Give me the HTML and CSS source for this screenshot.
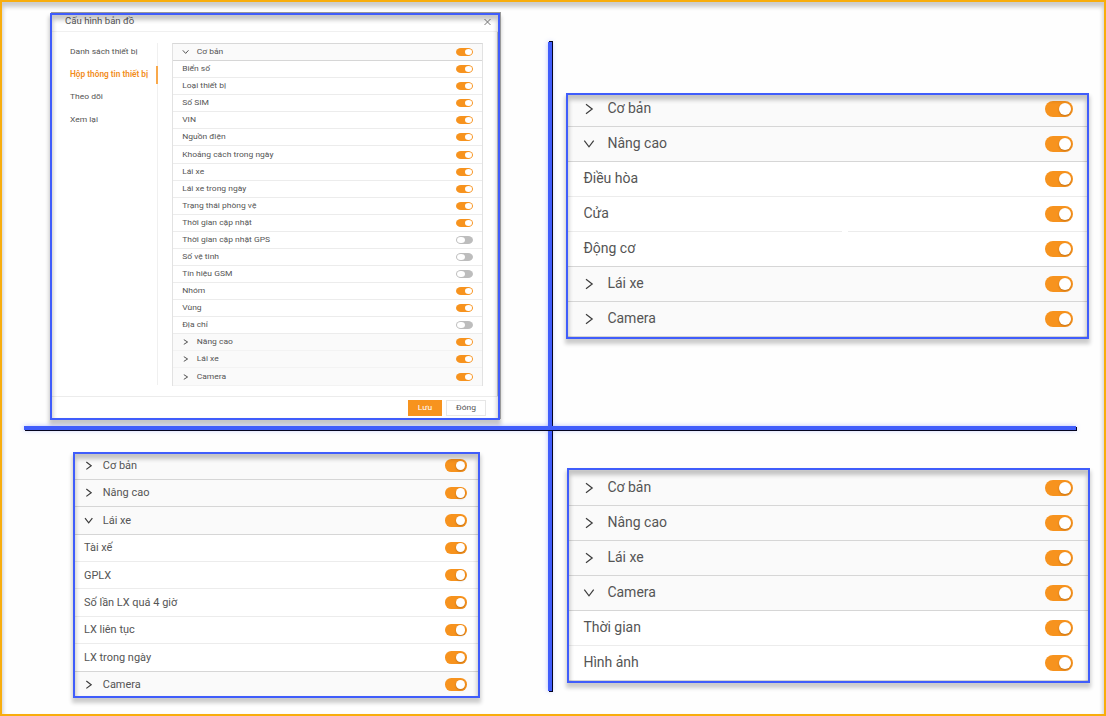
FILE: index.html
```html
<!DOCTYPE html>
<html lang="vi">
<head>
<meta charset="utf-8">
<title>Cấu hình bản đồ</title>
<link rel="stylesheet" href="styles.css">
</head>
<body>
<svg class="defs" aria-hidden="true">
  <symbol id="right" viewBox="0 0 12 12" preserveAspectRatio="none"><path d="M3 1.3 9.2 6 3 10.7"/></symbol>
  <symbol id="down" viewBox="0 0 12 12" preserveAspectRatio="none"><path d="M1.3 2.6 6 8.8 10.7 2.6"/></symbol>
</svg>
<main class="board">
  <section class="panel dialog">
    <header class="dialog-head">
      <h1 class="title">Cấu hình bản đồ</h1>
      <svg class="close" viewBox="0 0 8 8"><path d="M1 1 7 7M7 1 1 7"/></svg>
    </header>
    <div class="dialog-body">
      <nav class="tabs">
        <a class="tab">Danh sách thiết bị</a>
        <a class="tab active">Hộp thông tin thiết bị</a>
        <a class="tab">Theo dõi</a>
        <a class="tab">Xem lại</a>
      </nav>
      <div class="list">
        <div class="row head open"><svg class="icon"><use href="#down"/></svg><span class="label">Cơ bản</span><i class="switch"></i></div>
        <div class="row"><span class="label">Biển số</span><i class="switch"></i></div>
        <div class="row"><span class="label">Loại thiết bị</span><i class="switch"></i></div>
        <div class="row"><span class="label">Số SIM</span><i class="switch"></i></div>
        <div class="row"><span class="label">VIN</span><i class="switch"></i></div>
        <div class="row"><span class="label">Nguồn điện</span><i class="switch"></i></div>
        <div class="row"><span class="label">Khoảng cách trong ngày</span><i class="switch"></i></div>
        <div class="row"><span class="label">Lái xe</span><i class="switch"></i></div>
        <div class="row"><span class="label">Lái xe trong ngày</span><i class="switch"></i></div>
        <div class="row"><span class="label">Trạng thái phòng vệ</span><i class="switch"></i></div>
        <div class="row"><span class="label">Thời gian cập nhật</span><i class="switch"></i></div>
        <div class="row"><span class="label">Thời gian cập nhật GPS</span><i class="switch off"></i></div>
        <div class="row"><span class="label">Số vệ tinh</span><i class="switch off"></i></div>
        <div class="row"><span class="label">Tín hiệu GSM</span><i class="switch off"></i></div>
        <div class="row"><span class="label">Nhóm</span><i class="switch"></i></div>
        <div class="row"><span class="label">Vùng</span><i class="switch"></i></div>
        <div class="row"><span class="label">Địa chỉ</span><i class="switch off"></i></div>
        <div class="row head"><svg class="icon"><use href="#right"/></svg><span class="label">Nâng cao</span><i class="switch"></i></div>
        <div class="row head"><svg class="icon"><use href="#right"/></svg><span class="label">Lái xe</span><i class="switch"></i></div>
        <div class="row head"><svg class="icon"><use href="#right"/></svg><span class="label">Camera</span><i class="switch"></i></div>
      </div>
    </div>
    <footer class="dialog-foot">
      <button class="btn primary"><span class="label">Lưu</span></button>
      <button class="btn"><span class="label">Đóng</span></button>
    </footer>
  </section>

  <section class="panel advanced">
    <div class="list">
      <div class="row head"><svg class="icon"><use href="#right"/></svg><span class="label">Cơ bản</span><i class="switch"></i></div>
      <div class="row head"><svg class="icon"><use href="#down"/></svg><span class="label">Nâng cao</span><i class="switch"></i></div>
      <div class="row"><span class="label">Điều hòa</span><i class="switch"></i></div>
      <div class="row notched"><span class="label">Cửa</span><i class="switch"></i></div>
      <div class="row last"><span class="label">Động cơ</span><i class="switch"></i></div>
      <div class="row head"><svg class="icon"><use href="#right"/></svg><span class="label">Lái xe</span><i class="switch"></i></div>
      <div class="row head"><svg class="icon"><use href="#right"/></svg><span class="label">Camera</span><i class="switch"></i></div>
    </div>
  </section>

  <section class="panel driver">
    <div class="list">
      <div class="row head"><svg class="icon"><use href="#right"/></svg><span class="label">Cơ bản</span><i class="switch"></i></div>
      <div class="row head"><svg class="icon"><use href="#right"/></svg><span class="label">Nâng cao</span><i class="switch"></i></div>
      <div class="row head"><svg class="icon"><use href="#down"/></svg><span class="label">Lái xe</span><i class="switch"></i></div>
      <div class="row"><span class="label">Tài xế</span><i class="switch"></i></div>
      <div class="row"><span class="label">GPLX</span><i class="switch"></i></div>
      <div class="row"><span class="label">Số lần LX quá 4 giờ</span><i class="switch"></i></div>
      <div class="row"><span class="label">LX liên tục</span><i class="switch"></i></div>
      <div class="row last"><span class="label">LX trong ngày</span><i class="switch"></i></div>
      <div class="row head"><svg class="icon"><use href="#right"/></svg><span class="label">Camera</span><i class="switch"></i></div>
    </div>
  </section>

  <section class="panel camera">
    <div class="list">
      <div class="row head"><svg class="icon"><use href="#right"/></svg><span class="label">Cơ bản</span><i class="switch"></i></div>
      <div class="row head"><svg class="icon"><use href="#right"/></svg><span class="label">Nâng cao</span><i class="switch"></i></div>
      <div class="row head"><svg class="icon"><use href="#right"/></svg><span class="label">Lái xe</span><i class="switch"></i></div>
      <div class="row head"><svg class="icon"><use href="#down"/></svg><span class="label">Camera</span><i class="switch"></i></div>
      <div class="row"><span class="label">Thời gian</span><i class="switch"></i></div>
      <div class="row last"><span class="label">Hình ảnh</span><i class="switch"></i></div>
    </div>
  </section>

  <div class="rule vertical"></div>
  <div class="rule horizontal"></div>
</main>
</body>
</html>
```
FILE: styles.css
```css
* { box-sizing: border-box; }
body {
  margin: 0;
  font-family: Roboto, "Noto Sans", sans-serif;
  color: #555;
  background: #fff;
}
.defs { display: none; }

.board {
  position: relative;
  display: grid;
  grid-template-columns: 546px 1fr;
  grid-template-rows: 426px 1fr;
  width: 1106px;
  height: 716px;
  overflow: hidden;
  border: 2px solid #f8ad0d;
  background: #fefefe;
  box-shadow: inset 0 4px 4px 1px rgba(0, 0, 0, .2);
}

/* Framed panels; --sx and --sy are the drawing scale of each list */
.panel {
  --sx: 1;
  --sy: 1;
  --row: 35px;
  --pl: 15px;
  --pr: 14px;
  position: relative;
  border: 2px solid #405dfb;
  background: #fff;
  box-shadow: 0 4px 4px 1px rgba(0, 0, 0, .2);
  font-size: calc(14px * var(--sx));
}
.panel::after {
  content: "";
  position: absolute;
  inset: 0;
  box-shadow: inset 0 4px 4px 1px rgba(0, 0, 0, .22);
  pointer-events: none;
}
.advanced { width: 523px; height: 246px; margin: 91px 0 0 18px; }
.camera { --pl: 14px; --pr: 15px; width: 523px; height: 215px; margin: 40px 0 0 19px; }
.camera .list { padding-top: 1px; }
.driver {
  --sx: .783;
  --sy: .783;
  --row: 27.4px;
  --pl: 9px;
  --pr: 11px;
  width: 407px;
  height: 246px;
  margin: 24px 0 0 71px;
}
.advanced .list, .driver .list { height: 242px; overflow: hidden; }
.advanced .row:first-child { margin-top: -3px; }
.driver .row:first-child { margin-top: -1.6px; }

.row {
  position: relative;
  display: flex;
  align-items: center;
  height: var(--row);
  padding: 0 var(--pr) 0 var(--pl);
  border-bottom: 1px solid #ececec;
  background: #fff;
}
.row.head { background: #fafafa; border-bottom-color: #d6d6d6; }
.row.last { border-bottom-color: #d6d6d6; }
.row.notched::after {
  content: "";
  position: absolute;
  left: 274px;
  bottom: -1px;
  width: 6px;
  height: 1px;
  background: #fff;
}

.icon {
  flex: none;
  width: calc(12px * var(--sx));
  height: calc(12px * var(--sy));
  margin-right: calc(12px * var(--sx));
  overflow: visible;
  fill: none;
  stroke: #3c3c3c;
  stroke-width: 1.2;
}
.driver .icon { stroke-width: 1.5; }
.advanced .icon, .camera .icon { margin-bottom: 1px; }
.label { white-space: nowrap; }
.advanced .label, .camera .label { margin-left: .4px; padding-bottom: 2px; }
.switch {
  flex: none;
  display: block;
  width: calc(28px * var(--sx));
  height: calc(16px * var(--sy));
  margin-left: auto;
  padding: calc(2px * var(--sy)) calc(2px * var(--sx));
  border-radius: calc(8px * var(--sx)) / calc(8px * var(--sy));
  background: #f7931e;
}
.switch::before {
  content: "";
  display: block;
  width: calc(12px * var(--sx));
  height: calc(12px * var(--sy));
  margin-left: auto;
  border-radius: 50%;
  background: #fff;
  box-shadow: 0 1px 2px rgba(80, 40, 0, .3);
}
.switch.off { background: #bdbdbd; }
.switch.off::before { margin-left: 0; }

/* Configuration dialog */
.dialog {
  --sx: .607;
  --sy: .5;
  --row: 17.08px;
  --pl: 9.4px;
  --pr: 9px;
  display: flex;
  flex-direction: column;
  width: 450px;
  height: 407px;
  margin: 11px 0 0 48px;
  box-shadow: 1px -1px 0 #999, 0 4px 4px 1px rgba(0, 0, 0, .22);
}
.dialog .label, .tab, .title { transform: translateY(-.8px) scaleY(.86); }
.dialog-head {
  display: flex;
  align-items: center;
  justify-content: space-between;
  height: 17px;
  padding: 0 6px 2px 13px;
  border-bottom: 1px solid #f0f0f0;
}
.title { margin: 0; font-size: 9.6px; font-weight: 400; line-height: 12px; }
.close { width: 9px; height: 8px; stroke: #777; stroke-width: 1; fill: none; }
.dialog-body {
  display: flex;
  height: 364px;
  padding: 11px 14px 0 18px;
  border-right: 1px solid #c8c8c8;
}
.tabs {
  display: flex;
  flex-direction: column;
  gap: 4.5px;
  width: 88px;
  height: 342px;
  border-right: 1px solid #f0f0f0;
}
.tab { height: 18px; line-height: 18px; white-space: nowrap; }
.tab.active {
  margin-right: -1px;
  border-right: 2px solid #f9a94b;
  color: #f28c1a;
  font-weight: 600;
  font-size: 8.3px;
  line-height: 17px;
  transform: none;
}
.dialog .list {
  width: 312px;
  height: 343px;
  margin-left: 14px;
  border: 1px solid #e2e2e2;
  border-top-color: #d8d8d8;
  border-bottom: 0;
}
.dialog .row.head { border-bottom-color: #f3f3f3; }
.dialog .row.open { border-bottom-color: #d6d6d6; }
.dialog .icon { stroke-width: 1.6; }
.dialog .switch::before { box-shadow: none; }
.dialog-foot {
  display: flex;
  justify-content: flex-end;
  gap: 4px;
  height: 22px;
  padding: 3px 12px 0 0;
  border-top: 1px solid #ececec;
}
.btn {
  width: 40px;
  height: 16px;
  padding: 0;
  border: 1px solid #e6e6e6;
  background: #fff;
  color: inherit;
  font: inherit;
  line-height: 13px;
}
.btn .label { display: block; }
.btn.primary { width: 34px; border-color: #f7931e; background: #f7931e; color: #fff; }

/* Dividers crossing the whole board */
.rule { position: absolute; background: #405dfb; box-shadow: 1px 1px 0 #050520, 0 0 5px rgba(64, 93, 251, .4); }
.vertical {
  left: 546px;
  top: 40px;
  width: 4px;
  height: 649px;
  box-shadow: 1px -1px 0 #050520, 1px 1px 0 #050520, 0 0 5px rgba(64, 93, 251, .4);
}
.horizontal { left: 22px; top: 424px; width: 1052px; height: 4px; }
```
